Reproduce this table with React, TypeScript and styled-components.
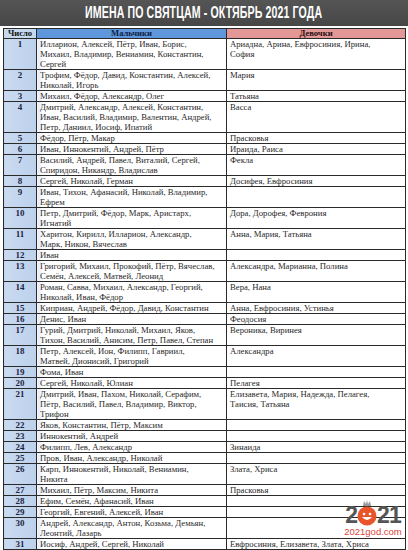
import React from "react";
import styled, { createGlobalStyle } from "styled-components";

const Global = createGlobalStyle`
  html, body { margin: 0; padding: 0; background: #ffffff; }
  body { width: 408px; height: 550px; overflow: hidden; }
`;

type Row = { n: number; boys: string[]; girls: string[] };

const rows: Row[] = [
  { n: 1, boys: ["Илларион, Алексей, Пётр, Иван, Борис,", "Михаил, Владимир, Вениамин, Константин,", "Сергей"], girls: ["Ариадна, Арина, Евфросиния, Ирина,", "София"] },
  { n: 2, boys: ["Трофим, Фёдор, Давид, Константин, Алексей,", "Николай, Игорь"], girls: ["Мария"] },
  { n: 3, boys: ["Михаил, Фёдор, Александр, Олег"], girls: ["Татьяна"] },
  { n: 4, boys: ["Дмитрий, Александр, Алексей, Константин,", "Иван, Василий, Владимир, Валентин, Андрей,", "Петр, Даниил, Иосиф, Ипатий"], girls: ["Васса"] },
  { n: 5, boys: ["Фёдор, Пётр, Макар"], girls: ["Прасковья"] },
  { n: 6, boys: ["Иван, Иннокентий, Андрей, Пётр"], girls: ["Ираида, Раиса"] },
  { n: 7, boys: ["Василий, Андрей, Павел, Виталий, Сергей,", "Спиридон, Никандр, Владислав"], girls: ["Фекла"] },
  { n: 8, boys: ["Сергей, Николай, Герман"], girls: ["Досифея, Евфросиния"] },
  { n: 9, boys: ["Иван, Тихон, Афанасий, Николай, Владимир,", "Ефрем"], girls: [] },
  { n: 10, boys: ["Петр, Дмитрий, Фёдор, Марк, Аристарх,", "Игнатий"], girls: ["Дора, Дорофея, Феврония"] },
  { n: 11, boys: ["Харитон, Кирилл, Илларион, Александр,", "Марк, Никон, Вячеслав"], girls: ["Анна, Мария, Татьяна"] },
  { n: 12, boys: ["Иван"], girls: [] },
  { n: 13, boys: ["Григорий, Михаил, Прокофий, Пётр, Вячеслав,", "Семён, Алексей, Матвей, Леонид"], girls: ["Александра, Марианна, Полина"] },
  { n: 14, boys: ["Роман, Савва, Михаил, Александр, Георгий,", "Николай, Иван, Фёдор"], girls: ["Вера, Нана"] },
  { n: 15, boys: ["Киприан, Андрей, Фёдор, Давид, Константин"], girls: ["Анна, Евфросиния, Устинья"] },
  { n: 16, boys: ["Денис, Иван"], girls: ["Феодосия"] },
  { n: 17, boys: ["Гурий, Дмитрий, Николай, Михаил, Яков,", "Тихон, Василий, Анисим, Петр, Павел, Степан"], girls: ["Вероника, Виринея"] },
  { n: 18, boys: ["Петр, Алексей, Ион, Филипп, Гавриил,", "Матвей, Дионисий, Григорий"], girls: ["Александра"] },
  { n: 19, boys: ["Фома, Иван"], girls: [] },
  { n: 20, boys: ["Сергей, Николай, Юлиан"], girls: ["Пелагея"] },
  { n: 21, boys: ["Дмитрий, Иван, Пахом, Николай, Серафим,", "Пётр, Василий, Павел, Владимир, Виктор,", "Трифон"], girls: ["Елизавета, Мария, Надежда, Пелагея,", "Таисия, Татьяна"] },
  { n: 22, boys: ["Яков, Константин, Пётр, Максим"], girls: [] },
  { n: 23, boys: ["Иннокентий, Андрей"], girls: [] },
  { n: 24, boys: ["Филипп, Лев, Александр"], girls: ["Зинаида"] },
  { n: 25, boys: ["Пров, Иван, Александр, Николай"], girls: [] },
  { n: 26, boys: ["Карп, Иннокентий, Николай, Вениамин,", "Никита"], girls: ["Злата, Хриса"] },
  { n: 27, boys: ["Михаил, Пётр, Максим, Никита"], girls: ["Прасковья"] },
  { n: 28, boys: ["Ефим, Семён, Афанасий, Иван"], girls: [] },
  { n: 29, boys: ["Георгий, Евгений, Алексей, Иван"], girls: [] },
  { n: 30, boys: ["Андрей, Александр, Антон, Козьма, Демьян,", "Леонтий, Лазарь"], girls: [] },
  { n: 31, boys: ["Иосиф, Андрей, Сергей, Николай"], girls: ["Евфросиния, Елизавета, Злата, Хриса"] },
];

const Page = styled.div`
  position: relative;
  width: 408px;
  height: 550px;
  display: flex;
  flex-direction: column;
  gap: 2px;
  font-family: "Liberation Serif", "Times New Roman", serif;
`;

const TitleBar = styled.div`
  height: 27px;
  background: linear-gradient(#555555, #464646);
  display: flex;
  align-items: center;
  justify-content: center;
  overflow: hidden;
`;

const TitleText = styled.h1`
  margin: 0;
  font-family: "Liberation Sans", Arial, sans-serif;
  font-weight: 700;
  font-size: 16px;
  letter-spacing: 0.2px;
  color: #ffffff;
  white-space: nowrap;
  transform: scaleX(0.66);
`;

const Table = styled.table`
  margin: 0 3px;
  width: 402px;
  border-collapse: collapse;
  table-layout: fixed;
  border: 1px solid #2a2a2a;
`;

const HeadCell = styled.th<{ $bg: string; $color: string }>`
  background: ${(p) => p.$bg};
  color: ${(p) => p.$color};
  border: 1px solid #2a2a2a;
  font-size: 8.6px;
  line-height: 9px;
  height: 9px;
  padding: 0;
  font-weight: 700;
  text-align: center;
`;

const NumCell = styled.td`
  background: linear-gradient(90deg, #c9daf0 0%, #bdd1ec 100%);
  border: 1px solid #2a2a2a;
  color: #1b2540;
  font-weight: 700;
  font-size: 9px;
  line-height: 10px;
  padding: 0;
  text-align: center;
  vertical-align: top;
`;

const NameCell = styled.td<{ $tint?: boolean }>`
  border: 1px solid #2a2a2a;
  background: ${(p) =>
    p.$tint ? "linear-gradient(90deg, #e2eaf6 0px, #ffffff 6px)" : "#ffffff"};
  color: #2a2a2a;
  font-size: 8.7px;
  line-height: 10px;
  padding: 0 0 0 3px;
  vertical-align: top;
  white-space: nowrap;
  overflow: hidden;
`;

const Line = styled.div`
  height: 10px;
`;

const Logo = styled.div`
  position: absolute;
  right: 4px;
  bottom: 13px;
  width: 62px;
  display: flex;
  flex-direction: column;
  align-items: center;
  gap: 1px;
`;

const LogoDigits = styled.div`
  display: flex;
  align-items: flex-end;
  height: 28px;
  font-family: "Liberation Sans", Arial, sans-serif;
  font-weight: 700;
  font-size: 23px;
  line-height: 22px;
  color: #555555;
  letter-spacing: -1px;
`;

const LogoSite = styled.div`
  font-family: "Liberation Sans", Arial, sans-serif;
  font-size: 9.5px;
  line-height: 10px;
  color: #d9453a;
`;

const Face = () => (
  <svg width="20" height="28" viewBox="0 0 20 28">
    <path d="M6 8 L7 3 L9 6 L10 2 L11 6 L13 3 L14 8 Z" fill="#9a9a9a" />
    <circle cx="10" cy="18" r="9.5" fill="#e8552a" />
    <circle cx="7" cy="16" r="1.3" fill="#ffffff" />
    <circle cx="13" cy="16" r="1.3" fill="#ffffff" />
    <path d="M5 19 Q10 25 15 19 Z" fill="#ffffff" />
  </svg>
);

export default function App() {
  return (
    <>
      <Global />
      <Page>
        <TitleBar>
          <TitleText>ИМЕНА ПО СВЯТЦАМ - ОКТЯБРЬ 2021 ГОДА</TitleText>
        </TitleBar>
        <Table>
          <colgroup>
            <col style={{ width: 33 }} />
            <col style={{ width: 190 }} />
            <col style={{ width: 179 }} />
          </colgroup>
          <thead>
            <tr>
              <HeadCell $bg="#c6d8ee" $color="#111111">Число</HeadCell>
              <HeadCell $bg="#5f97dc" $color="#0f1f44">Мальчики</HeadCell>
              <HeadCell $bg="#e39797" $color="#2a1010">Девочки</HeadCell>
            </tr>
          </thead>
          <tbody>
            {rows.map((r) => (
              <tr key={r.n}>
                <NumCell>{r.n}</NumCell>
                <NameCell $tint>
                  {r.boys.map((l, i) => (
                    <Line key={i}>{l}</Line>
                  ))}
                </NameCell>
                <NameCell>
                  {r.girls.map((l, i) => (
                    <Line key={i}>{l}</Line>
                  ))}
                </NameCell>
              </tr>
            ))}
          </tbody>
        </Table>
        <Logo>
          <LogoDigits>
            <span>2</span>
            <Face />
            <span>21</span>
          </LogoDigits>
          <LogoSite>2021god.com</LogoSite>
        </Logo>
      </Page>
    </>
  );
}
